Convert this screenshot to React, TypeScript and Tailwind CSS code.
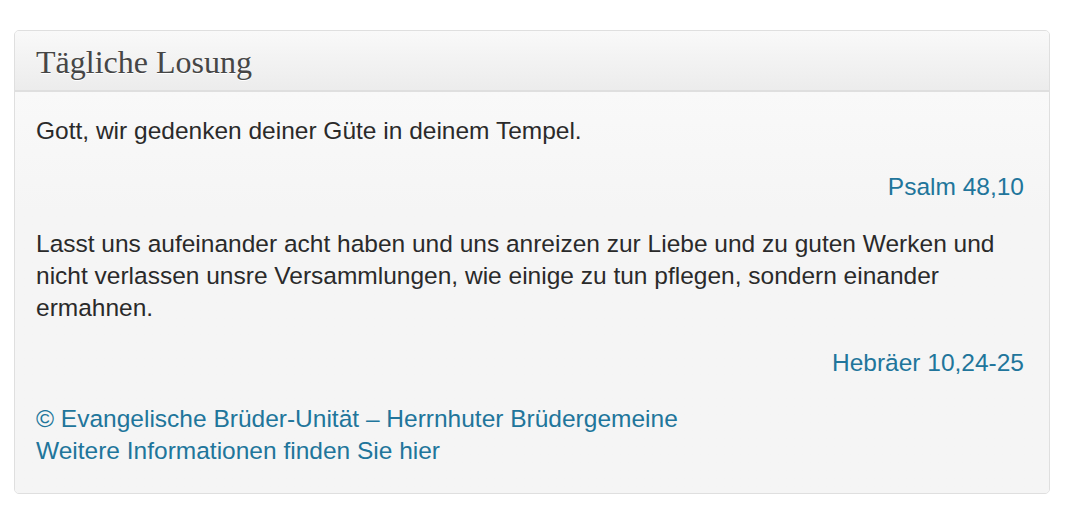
export default function App() {
  return (
    <div className="min-h-[518px] bg-white pt-[30px] px-[14px] font-['Liberation_Sans',Arial,sans-serif]">
      <div className="w-[1036px] rounded-[5px] border border-[#dfdfdf] bg-[#f5f5f5] overflow-hidden">
        <div className="h-[61px] border-b-2 border-[#dfdfdf] bg-gradient-to-b from-[#f9f9f9] to-[#ececec] px-[21px] flex items-center">
          <h2 className="font-['Liberation_Serif',Georgia,serif] text-[32px] text-[#464646] leading-none pt-[2px] [text-shadow:0_1px_0_#fff]">
            Tägliche Losung
          </h2>
        </div>
        <div className="bg-gradient-to-b from-[#f9f9f9] to-[#f5f5f5] to-[30%] pl-[21px] pr-[25px] pt-[23px] pb-[26px] text-[24.5px] leading-[32px] text-[#2a2a2a]">
          <p>Gott, wir gedenken deiner Güte in deinem Tempel.</p>
          <p className="mt-[24px] text-right">
            <a className="text-[#21759b]">Psalm 48,10</a>
          </p>
          <p className="mt-[25px]">
            Lasst uns aufeinander acht haben und uns anreizen zur Liebe und zu guten Werken und nicht verlassen unsre Versammlungen, wie einige zu tun pflegen, sondern einander ermahnen.
          </p>
          <p className="mt-[23px] text-right">
            <a className="text-[#21759b]">Hebräer 10,24-25</a>
          </p>
          <p className="mt-[24px] text-[#21759b]">
            <a>© Evangelische Brüder-Unität – Herrnhuter Brüdergemeine</a>
            <br />
            <a>Weitere Informationen finden Sie hier</a>
          </p>
        </div>
      </div>
    </div>
  );
}
